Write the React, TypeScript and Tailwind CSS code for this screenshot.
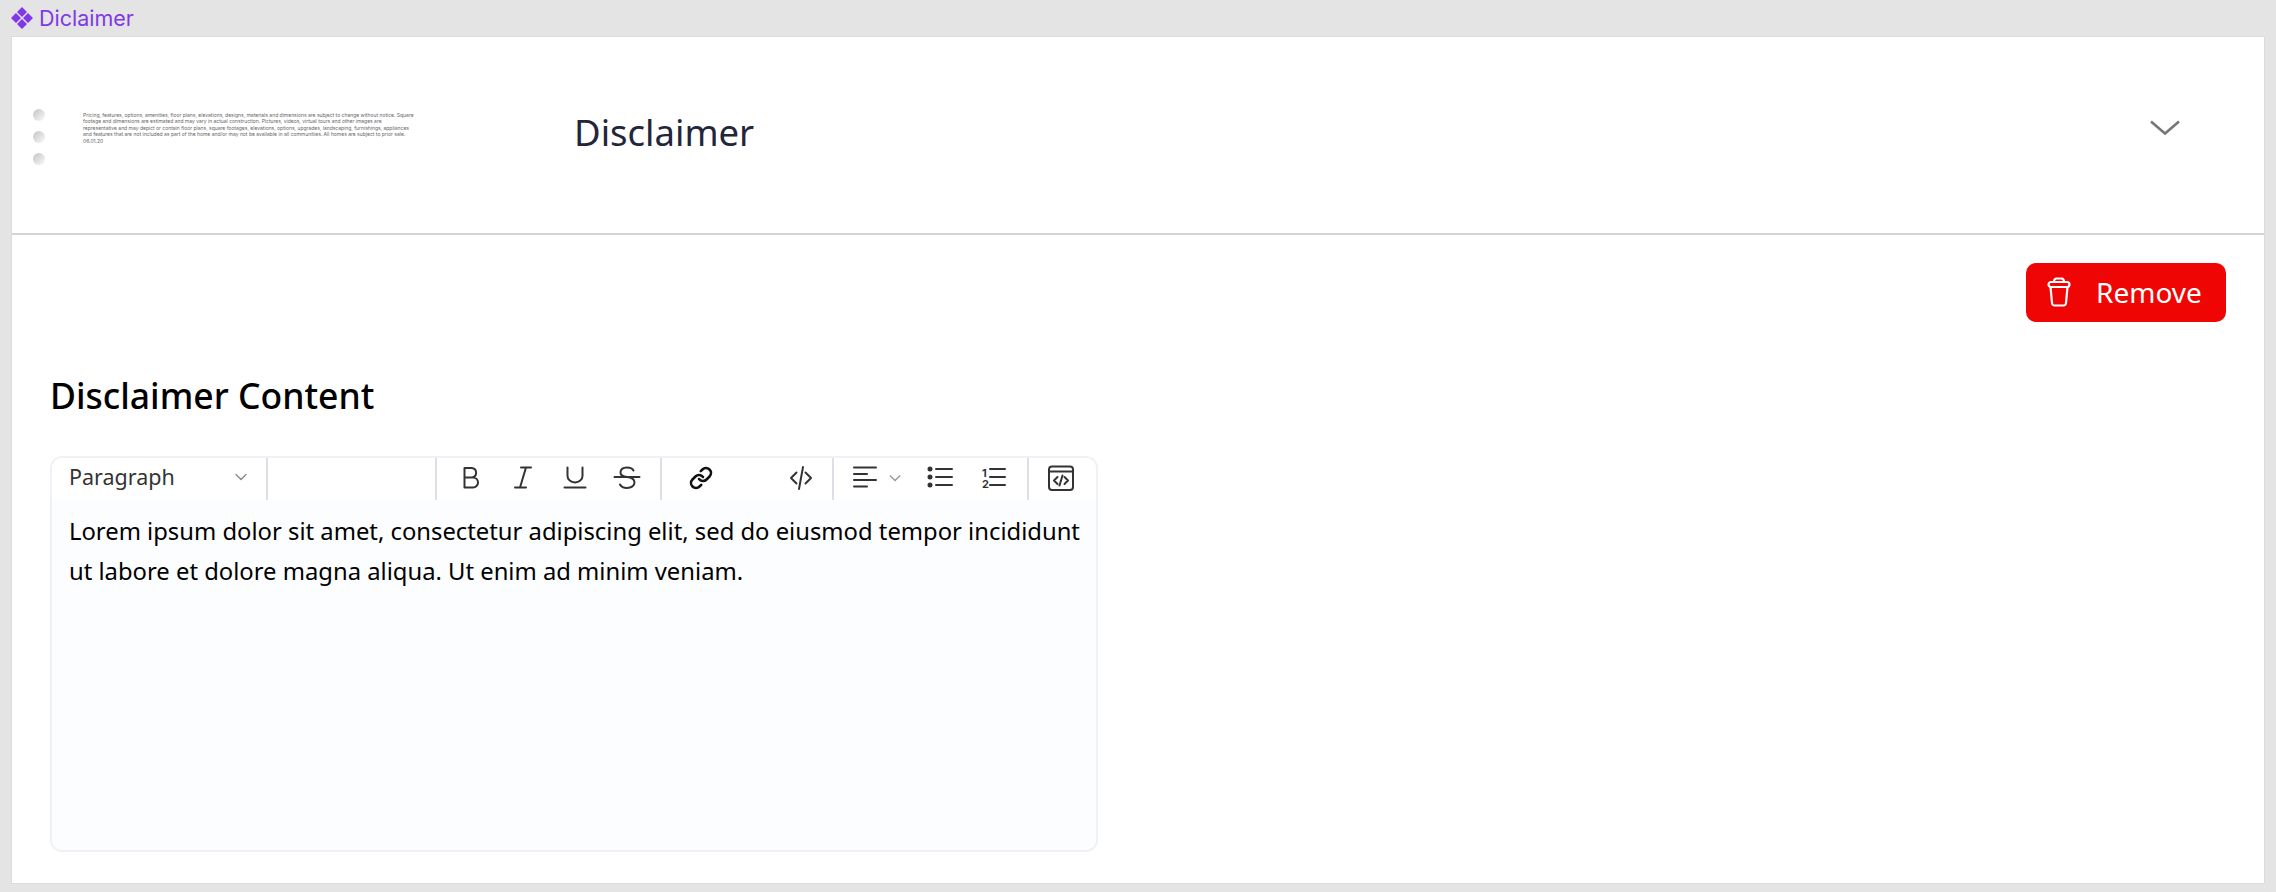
import { ChevronDown } from 'lucide-react';

const disclaimer = [
  'Pricing, features, options, amenities, floor plans, elevations, designs, materials and dimensions are subject to change without notice. Square',
  'footage and dimensions are estimated and may vary in actual construction. Pictures, videos, virtual tours and other images are',
  'representative and may depict or contain floor plans, square footages, elevations, options, upgrades, landscaping, furnishings, appliances',
  'and features that are not included as part of the home and/or may not be available in all communities. All homes are subject to prior sale.',
  '06.01.20',
];

function Icon({ children }: { children: React.ReactNode }) {
  return (
    <svg viewBox="0 0 28 28" fill="none" stroke="#333" strokeWidth="2" strokeLinecap="round" strokeLinejoin="round" className="size-7 shrink-0">
      {children}
    </svg>
  );
}

function Divider() {
  return <div className="w-[2px] shrink-0 self-stretch bg-[#dcdfe6]" />;
}

function Dot() {
  return <span className="size-3 rounded-full bg-gradient-to-br from-[#c4c4c4] to-[#fafafa]" />;
}

export default function App() {
  return (
    <div className="flex h-[892px] flex-col bg-[#e4e4e4] px-[11px] pb-2 font-['Noto_Sans',sans-serif]">
      <div className="flex h-9 items-center gap-[6px] font-['Inter',sans-serif] text-[21.5px] text-[#8038e8]">
        <svg viewBox="0 0 22 22" className="size-[22px]" fill="#8038e8">
          <path d="M11 0l5 5-5 5-5-5zM5 6l5 5-5 5-5-5zM17 6l5 5-5 5-5-5zM11 12l5 5-5 5-5-5z" />
        </svg>
        Diclaimer
      </div>

      <div className="flex flex-1 flex-col border border-[#dcdcdc] bg-white">
        <div className="flex h-[198px] shrink-0 items-start border-b-2 border-[#d4d4d4]">
          <div className="mt-[72px] ml-[21px] flex w-[50px] flex-col gap-2.5">
            <Dot />
            <Dot />
            <Dot />
          </div>
          <p className="mt-[75px] w-[334px] font-['Inter',sans-serif] text-[5px] leading-[6.4px] whitespace-nowrap text-[#666]">
            {disclaimer.map((line) => (
              <span key={line} className="block">
                {line}
              </span>
            ))}
          </p>
          <h2 className="mt-[70px] ml-[157px] flex-1 text-[36.5px] leading-[50px] text-[#23263b]">Disclaimer</h2>
          <svg viewBox="0 0 30 16" fill="none" stroke="#777" strokeWidth="2.6" className="mt-[83px] mr-[84px] h-4 w-[30px]">
            <path d="M1 1.500L15 13.500L29 1.500" />
          </svg>
        </div>

        <div className="flex flex-1 flex-col px-[38px]">
          <div className="mt-[28px] flex justify-end">
            <button className="flex h-[59px] w-[200px] items-center gap-[25px] rounded-[10px] bg-[#f00505] pb-px pl-[21px] text-[28px] text-white">
              <svg viewBox="0 0 24 30" className="h-[30px] w-6" fill="none" stroke="white" strokeWidth="2.2" strokeLinecap="round" strokeLinejoin="round">
                <path d="M7 5C7 2.500 8 1.500 9.500 1.500H14.500C16 1.500 17 2.500 17 5" />
                <rect x="1.500" y="5" width="21" height="5" rx="2.500" />
                <path d="M3.500 10L5 26C5.200 27.800 6 28.500 7.500 28.500H16.500C18 28.500 18.800 27.800 19 26L20.500 10" />
              </svg>
              Remove
            </button>
          </div>

          <h3 className="mt-[51px] text-[35.5px] leading-[44px] font-medium text-black">Disclaimer Content</h3>

          <div className="mt-[39px] flex h-[396px] w-[1048px] flex-col overflow-hidden rounded-xl border-2 border-[#f0f1f6]">
            <div className="flex h-[42px] shrink-0 bg-white text-[#333]">
              <div className="flex w-[214px] items-center justify-between pr-[15px] pb-1 pl-[17px] text-[21.5px]">
                Paragraph
                <ChevronDown className="size-5 text-[#888]" strokeWidth={1.6} />
              </div>
              <Divider />
              <div className="w-[167px]" />
              <Divider />

              <div className="flex w-[223px] items-center gap-6 pb-[3px] pl-[20px]">
                <Icon>
                  <path d="M7.500 4H15a4.800 4.800 0 0 1 0 9.500H7.500zM7.500 13.500H16a5 5 0 0 1 0 10H7.500z" />
                </Icon>
                <Icon>
                  <path d="M12 3.500H22M6 23.500H17M17 3.500L11 23.500" />
                </Icon>
                <Icon>
                  <path d="M6.500 3.500V12a7.500 6.500 0 0 0 15 0V3.500M3.500 23.500H24.500" />
                </Icon>
                <Icon>
                  <path d="M20.500 6.500C19.500 4.500 17 3.500 14 3.500C10 3.500 7.500 5.500 7.500 8.500C7.500 11 9 12.500 14 13C19 13.500 21.500 15.500 21.500 18.500C21.500 21.500 18.500 24 14 24C10.500 24 8 22.500 7 20.500M1.500 13H26.500" />
                </Icon>
              </div>
              <Divider />

              <div className="flex w-[170px] items-center gap-[74px] pb-[3px] pl-[27px]">
                <svg viewBox="0 0 24 24" fill="none" stroke="#111" strokeWidth="2.6" strokeLinecap="round" strokeLinejoin="round" className="size-6 shrink-0">
                  <path d="M10 13a5 5 0 0 0 7.540.540l3-3a5 5 0 0 0-7.070-7.070l-1.720 1.710" />
                  <path d="M14 11a5 5 0 0 0-7.540-.540l-3 3a5 5 0 0 0 7.070 7.070l1.710-1.710" />
                </svg>
                <Icon>
                  <path d="M9.500 8.500L4 14L9.500 19.500M18.500 8.500L24 14L18.500 19.500M16 3L12 25" />
                </Icon>
              </div>
              <Divider />

              <div className="flex w-[193px] items-center pb-[3px] pl-[17px]">
                <Icon>
                  <path d="M3 3.500H25M3 10H16M3 16H25M3 22.500H16" />
                </Icon>
                <svg viewBox="0 0 14 8" fill="none" stroke="#999" strokeWidth="1.600" className="ml-[10px] h-2 w-3 shrink-0">
                  <path d="M1 1L7 7L13 1" />
                </svg>
                <div className="ml-[25px]">
                  <Icon>
                    <path d="M10 5H26M10 13H26M10 21H26" />
                    <circle cx="4" cy="5" r="1.500" fill="#333" />
                    <circle cx="4" cy="13" r="1.500" fill="#333" />
                    <circle cx="4" cy="21" r="1.500" fill="#333" />
                  </Icon>
                </div>
                <div className="ml-[25px]">
                  <Icon>
                    <path d="M11 5H26M11 13H26M11 21H26" />
                    <text x="3" y="13" fontSize="11" fontWeight="700" fill="#333" stroke="none" fontFamily="Inter">1</text>
                    <text x="3" y="24" fontSize="11" fontWeight="700" fill="#333" stroke="none" fontFamily="Inter">2</text>
                  </Icon>
                </div>
              </div>
              <Divider />

              <div className="flex items-center pb-[3px] pl-[18px]">
                <Icon>
                  <rect x="2" y="2.500" width="24" height="23.500" rx="3" />
                  <path d="M2 7.500H26M10.500 13L7 16.500L10.500 20M17.500 13L21 16.500L17.500 20M15.500 11.500L12.500 21.500" />
                </Icon>
              </div>
            </div>
            <div className="flex-1 bg-[#fcfdff] pt-[11px] pr-[14px] pl-[17px] text-[23.8px] leading-[40px] text-black">
              Lorem ipsum dolor sit amet, consectetur adipiscing elit, sed do eiusmod tempor incididunt ut labore et dolore magna aliqua. Ut enim ad minim veniam.
            </div>
          </div>
        </div>
      </div>
    </div>
  );
}
